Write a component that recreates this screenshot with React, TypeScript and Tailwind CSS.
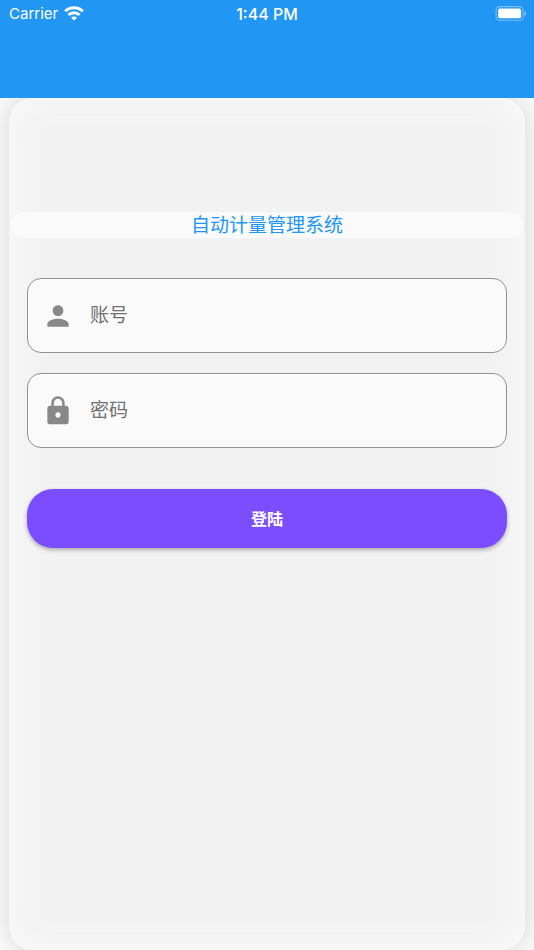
import type { ReactNode } from 'react';
import { MdLock, MdPerson } from 'react-icons/md';

interface FieldProps {
  id: string;
  type: string;
  label: string;
  icon: ReactNode;
}

function StatusBar() {
  return (
    <div className="grid grid-cols-3 items-center h-7 px-2 text-base leading-7">
      <div className="flex items-center gap-1.5 pl-px">
        <span className="text-[15px]">Carrier</span>
        <svg className="w-5 h-4" viewBox="0 0 20 16" fill="none" stroke="currentColor" strokeWidth="3">
          <path d="M1.2 5.3a12.4 12.4 0 0 1 17.6 0" />
          <path d="M4.5 9a7.8 7.8 0 0 1 11 0" />
          <path d="M10 14.6 7 11.7a4.2 4.2 0 0 1 6 0z" fill="currentColor" stroke="none" />
        </svg>
      </div>
      <span className="text-center font-medium">1:44 PM</span>
      <svg className="w-8 h-4 justify-self-end" viewBox="0 0 32 16" fill="currentColor">
        <rect x="2.1" y="0.6" width="27" height="13.6" rx="3.8" fill="none" stroke="currentColor" strokeOpacity="0.4" strokeWidth="1.1" />
        <rect x="4.1" y="2.6" width="23" height="9.6" rx="1.8" />
        <path d="M30.4 5c1 .4 1.6 1.3 1.6 2.4s-.6 2-1.6 2.4z" fillOpacity="0.45" />
      </svg>
    </div>
  );
}

function Field({ id, type, label, icon }: FieldProps) {
  return (
    <div className="flex items-center gap-4 h-[75px] px-[14px] rounded-[14px] border border-[#919191] bg-[#fafafa]">
      <label htmlFor={id} aria-label={label} className="text-[32px] text-[#888888]">
        {icon}
      </label>
      <input
        id={id}
        type={type}
        placeholder={label}
        className="flex-1 min-w-0 h-full bg-transparent outline-none text-[19px] text-gray-800 placeholder:text-[#707070]"
      />
    </div>
  );
}

export default function App() {
  return (
    <div className="min-h-screen flex flex-col overflow-hidden bg-[#fafafa] font-['Inter','Noto_Sans_CJK_SC',sans-serif]">
      <header className="relative z-10 h-[98px] bg-[#2196f3] text-white">
        <StatusBar />
      </header>

      <main className="flex-1 mx-[9px] pt-[114px] rounded-[24px] bg-[#f2f2f2] shadow-[0_0_24px_rgba(0,0,0,0.15),inset_0_0_32px_3px_#fafafa]">
        <h1 className="mx-0.5 h-[26px] rounded-full bg-[#fafafa] text-center text-[19px] leading-7 text-[#2196f3]">
          自动计量管理系统
        </h1>

        <form className="px-[18px] pt-10" onSubmit={(e) => e.preventDefault()}>
          <div className="flex flex-col gap-5">
            <Field id="account" type="text" label="账号" icon={<MdPerson />} />
            <Field id="password" type="password" label="密码" icon={<MdLock />} />
          </div>
          <button
            type="submit"
            className="mt-[41px] w-full h-[59px] rounded-[26px] bg-[#7c4dff] text-base font-bold text-white shadow-[0_2px_4px_rgba(0,0,0,0.3)]"
          >
            登陆
          </button>
        </form>
      </main>
    </div>
  );
}
